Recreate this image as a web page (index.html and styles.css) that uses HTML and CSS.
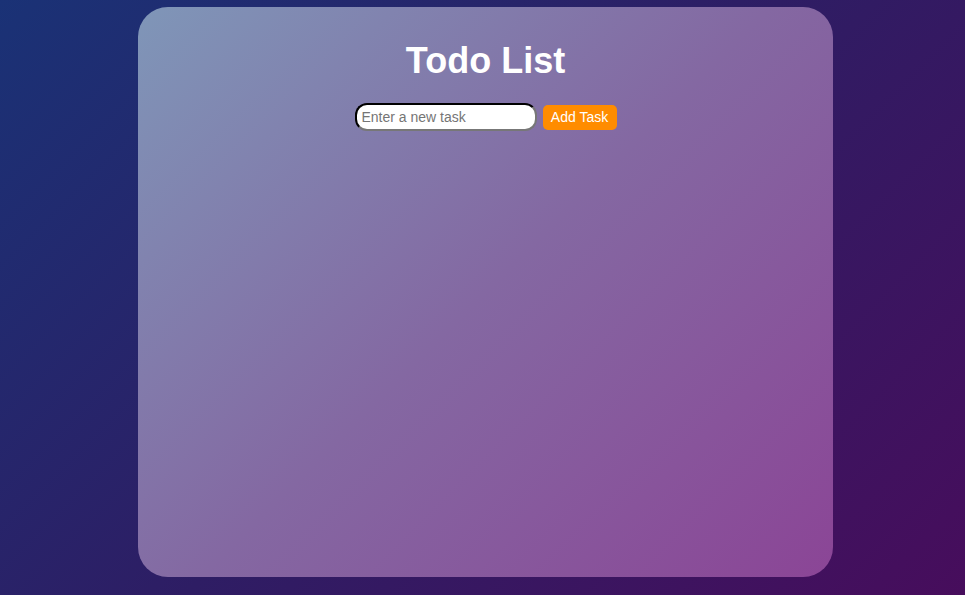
FILE: index.html
```html
<!DOCTYPE html>
<html>
<head>
<meta charset="utf-8">
<link rel="stylesheet" href="styles.css">
</head>
<body>
<div class="card">
  <h1 class="title">Todo List</h1>
  <div class="form">
    <input class="task-input" type="text" placeholder="Enter a new task">
    <button class="add-btn">Add Task</button>
  </div>
</div>
</body>
</html>
```
FILE: styles.css
```css
html, body { height: 100%; }
body {
  margin: 0;
  font-family: "Liberation Sans", Arial, sans-serif;
  background: linear-gradient(135deg, #1a3276 0%, #2e1d64 50%, #470d5c 100%);
  display: flex;
  justify-content: center;
  align-items: flex-start;
  padding-top: 7px;
  padding-left: 6px;
  box-sizing: border-box;
}
.card {
  width: 695px;
  height: 570px;
  border-radius: 30px;
  background: linear-gradient(135deg, #7f96b8 0%, #8468a2 50%, #8b4596 100%);
  box-sizing: border-box;
  padding-top: 33px;
  display: flex;
  flex-direction: column;
  align-items: center;
}
.title {
  margin: 0;
  color: #fff;
  font-size: 36px;
  font-weight: bold;
  line-height: 42px;
}
.form {
  margin-top: 21px;
  display: flex;
  align-items: center;
  gap: 6px;
}
.task-input {
  width: 182px;
  height: 28px;
  box-sizing: border-box;
  border: 2px inset #767676;
  border-color: #222 #777 #777 #222;
  border-radius: 12px;
  padding: 0 5px;
  font-family: "Liberation Sans", Arial, sans-serif;
  font-size: 14px;
  background: #fff;
}
.task-input::placeholder { color: #757575; }
.add-btn {
  height: 25px;
  width: 74px;
  border: none;
  border-radius: 5px;
  background: #ff8c00;
  color: #fff;
  font-family: "Liberation Sans", Arial, sans-serif;
  font-size: 14px;
  padding: 0;
}
```
